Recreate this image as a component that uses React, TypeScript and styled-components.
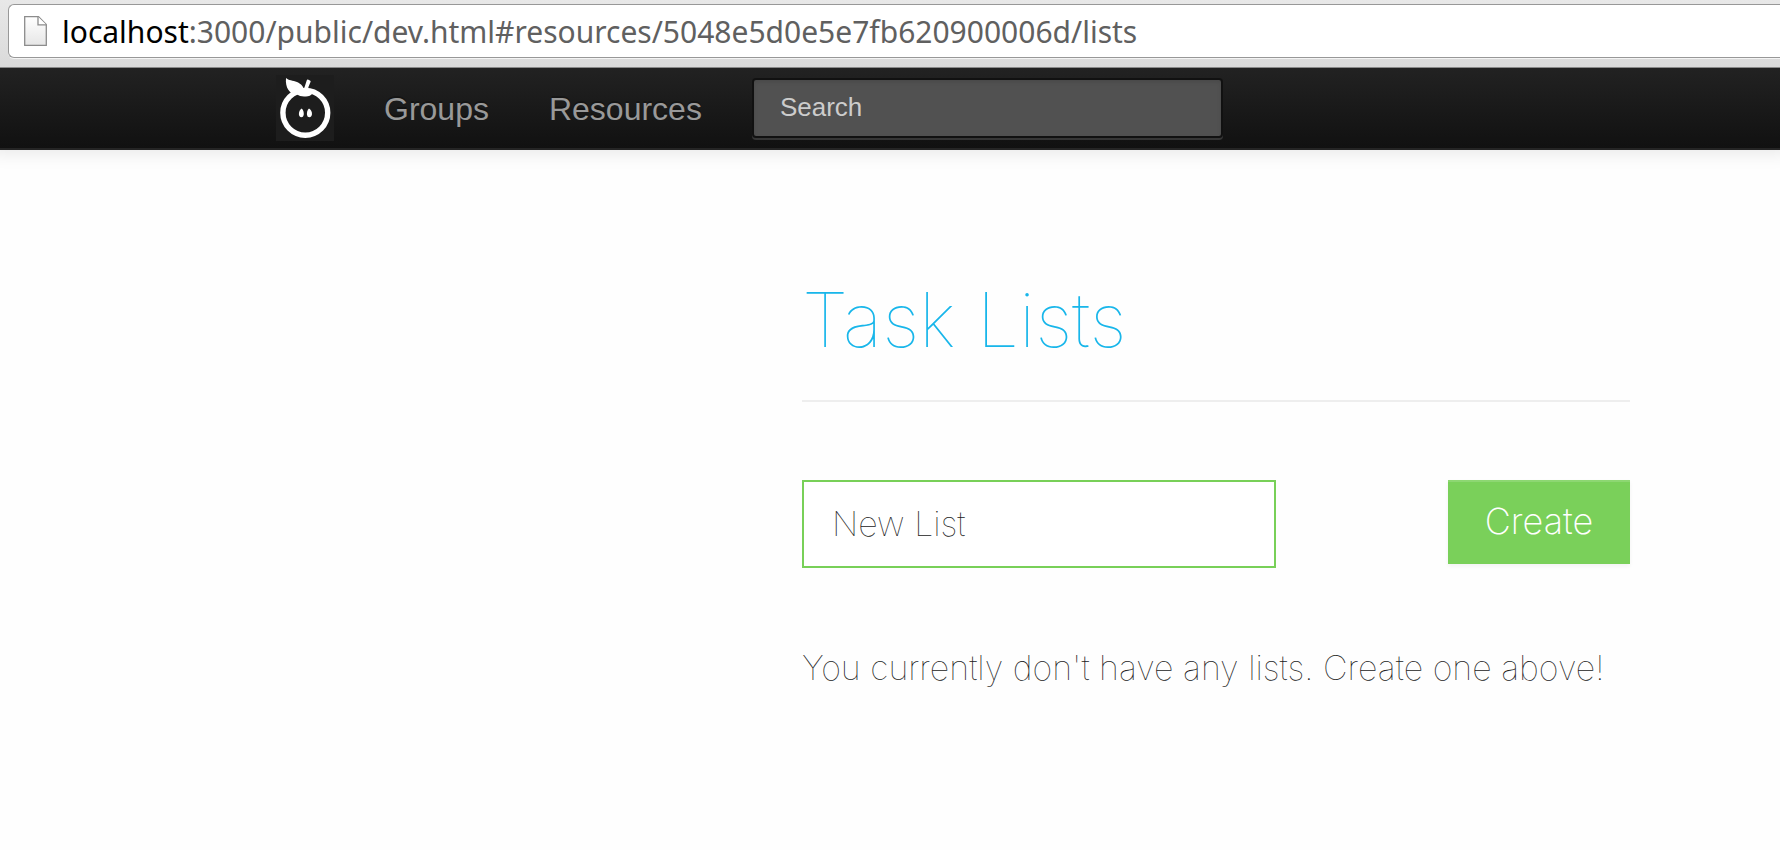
import React from "react";
import styled, { createGlobalStyle } from "styled-components";

const thin = `Inter, "Liberation Sans", sans-serif`;
const sans = `"Liberation Sans", Arial, sans-serif`;

const GlobalStyle = createGlobalStyle`
  *, *::before, *::after { box-sizing: border-box; }
  body { margin: 0; background: #fefefe; color: #444; font-family: ${thin}; }
`;

const BrowserBar = styled.header`
  position: relative;
  z-index: 1;
  display: flex;
  height: 68px;
  padding: 4px 0 9px 8px;
  overflow: hidden;
  background: linear-gradient(#e8e8e8, #dadada);
  border-bottom: 1px solid #8a8a8a;
`;

const AddressField = styled.div`
  display: flex;
  flex: 1;
  align-items: center;
  gap: 14px;
  padding-left: 15px;
  background: #fff;
  border: 1px solid #989898;
  border-right: 0;
  border-radius: 6px 0 0 6px;
  box-shadow: 0 1px 0 #f4f4f4;
`;

const Address = styled.p`
  margin: 0;
  padding-top: 2px;
  color: #606060;
  font: 30px/36px "Noto Sans", sans-serif;
  white-space: nowrap;
`;

const Host = styled.span`
  color: #000;
`;

const NavBar = styled.nav`
  display: flex;
  align-items: center;
  height: 82px;
  padding: 0 24px 0 276px;
  background: linear-gradient(#222, #111);
  border-bottom: 2px solid #252525;
  box-shadow: 0 -8px 18px 10px rgba(0, 0, 0, 0.1);
`;

const Brand = styled.a`
  display: flex;
  background: #1d1d1d;
`;

const NavLinks = styled.ul`
  display: flex;
  gap: 60px;
  margin: 0 50px;
  padding: 2px 0 0;
  list-style: none;
`;

const NavLink = styled.a`
  color: #999;
  font: 32px/40px ${sans};
  text-decoration: none;
  text-shadow: 0 -2px 0 rgba(0, 0, 0, 0.25);
`;

const SearchInput = styled.input`
  width: 471px;
  height: 60px;
  padding: 0 26px 2px;
  color: #fff;
  font: 26px/32px ${sans};
  background: #515151;
  border: 2px solid #111;
  border-radius: 4px;
  box-shadow: inset 0 2px 4px rgba(0, 0, 0, 0.1), 0 2px 0 rgba(255, 255, 255, 0.15);

  &::placeholder { color: #ccc; opacity: 1; }
`;

const Page = styled.main`
  margin-left: 802px;
  padding: 120px 150px 60px 0;
`;

const Title = styled.h1`
  margin: 0;
  padding-bottom: 30px;
  color: #18b6ea;
  font-size: 75px;
  font-weight: 100;
  line-height: 100px;
  white-space: nowrap;
  border-bottom: 2px solid #eee;
`;

const CreateForm = styled.form`
  display: flex;
  align-items: flex-start;
  justify-content: space-between;
  margin-top: 78px;
`;

const ListInput = styled.input`
  width: 474px;
  height: 88px;
  padding: 0 28px 2px;
  color: #444;
  font: 100 34px/40px ${thin};
  background: #fff;
  border: 2px solid #78d058;
  border-radius: 0;

  &::placeholder { color: #222; opacity: 1; }
`;

const CreateButton = styled.button`
  width: 182px;
  height: 84px;
  padding: 0 0 2px;
  color: #fff;
  font: 200 36px/40px ${thin};
  background: #7ad05a;
  border: 0;
  box-shadow: inset 0 2px 0 rgba(255, 255, 255, 0.15), 0 2px 4px rgba(0, 0, 0, 0.05);
`;

const EmptyNote = styled.p`
  margin: 78px 0 0;
  color: #222;
  font-size: 34px;
  font-weight: 100;
  line-height: 44px;
  white-space: nowrap;
`;

const PageIcon = () => (
  <svg width="24" height="32" viewBox="0 0 24 32" aria-hidden="true">
    <defs>
      <linearGradient id="sheet" x1="0" y1="0" x2="0" y2="1">
        <stop offset="0" stopColor="#fff" />
        <stop offset="1" stopColor="#e6e6e6" />
      </linearGradient>
    </defs>
    <path d="M.7 1.7H14.5L22.3 9.5V30.3H.7Z" fill="url(#sheet)" stroke="#8c8c8c" strokeWidth="1.3" />
    <path d="M14 1.7V9.8H22.3" fill="#fff" stroke="#8c8c8c" strokeWidth="1.3" />
  </svg>
);

const AppleLogo = () => (
  <svg width="58" height="66" viewBox="0 0 58 66" fill="#fff" aria-hidden="true">
    <circle cx="29.3" cy="37.8" r="22.4" fill="#1d1d1d" stroke="#fff" strokeWidth="5.4" />
    <path d="M10 3C12.5 5.5 17 5.3 21 7C25.5 9 27.5 12 27.8 14.500L30.700 5.500Q31 4 32.500 4.700L34.300 5.700Q35 6.200 34.400 7.300Q32 11.500 32 16.500L37 18Q34 21.800 29.200 21.500Q24 21.800 21 19.500C13.500 19.500 9 12.500 10 3Z" />
    <path d="M25.600 33.500C27.500 35 28 38 27.700 40Q27.300 42.200 25.300 42.200Q23 42 22.900 39C22.900 36.500 24 34.500 25.600 33.500Z" />
    <path d="M33 33.500C34.800 34.500 36 36.500 36 39Q35.800 42 33.400 42.200Q31.300 42.200 31 40C30.700 37.500 31.200 35 33 33.500Z" />
  </svg>
);

export default function App() {
  return (
    <>
      <GlobalStyle />
      <BrowserBar>
        <AddressField>
          <PageIcon />
          <Address>
            <Host>localhost</Host>:3000/public/dev.html#resources/5048e5d0e5e7fb620900006d/lists
          </Address>
        </AddressField>
      </BrowserBar>
      <NavBar>
        <Brand href="#" aria-label="Home">
          <AppleLogo />
        </Brand>
        <NavLinks>
          <li><NavLink href="#groups">Groups</NavLink></li>
          <li><NavLink href="#resources">Resources</NavLink></li>
        </NavLinks>
        <SearchInput type="search" placeholder="Search" aria-label="Search" />
      </NavBar>
      <Page>
        <Title>Task Lists</Title>
        <CreateForm onSubmit={(event) => event.preventDefault()}>
          <ListInput type="text" placeholder="New List" aria-label="New List" />
          <CreateButton type="submit">Create</CreateButton>
        </CreateForm>
        <EmptyNote>You currently don't have any lists. Create one above!</EmptyNote>
      </Page>
    </>
  );
}
